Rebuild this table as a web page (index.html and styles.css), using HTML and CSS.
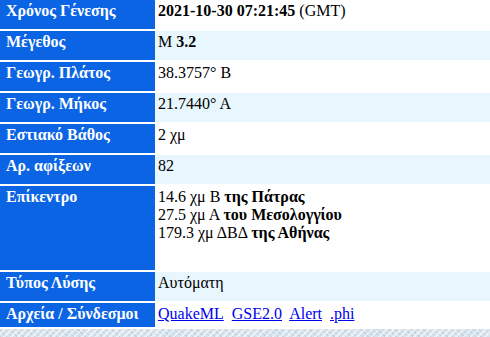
FILE: index.html
```html
<!DOCTYPE html>
<html lang="el">
<head>
<meta charset="utf-8">
<title>Σεισμός</title>
<link rel="stylesheet" href="styles.css">
</head>
<body>
<div class="info">
  <div class="row">
    <div class="label">Χρόνος Γένεσης</div>
    <div class="value"><b>2021-10-30 07:21:45</b> (GMT)</div>
  </div>
  <div class="row alt">
    <div class="label">Μέγεθος</div>
    <div class="value">M <b>3.2</b></div>
  </div>
  <div class="row">
    <div class="label">Γεωγρ. Πλάτος</div>
    <div class="value">38.3757° Β</div>
  </div>
  <div class="row alt">
    <div class="label">Γεωγρ. Μήκος</div>
    <div class="value">21.7440° Α</div>
  </div>
  <div class="row">
    <div class="label">Εστιακό Βάθος</div>
    <div class="value">2 χμ</div>
  </div>
  <div class="row alt">
    <div class="label">Αρ. αφίξεων</div>
    <div class="value">82</div>
  </div>
  <div class="row tall">
    <div class="label">Επίκεντρο</div>
    <div class="value">14.6 χμ Β <b>της Πάτρας</b><br>27.5 χμ Α <b>του Μεσολογγίου</b><br>179.3 χμ ΔΒΔ <b>της Αθήνας</b></div>
  </div>
  <div class="row alt">
    <div class="label">Τύπος Λύσης</div>
    <div class="value">Αυτόματη</div>
  </div>
  <div class="row short">
    <div class="label">Αρχεία / Σύνδεσμοι</div>
    <div class="value links"><a href="#">QuakeML</a>&nbsp; <a href="#">GSE2.0</a>&nbsp; <a href="#">Alert</a>&nbsp; <a href="#">.phi</a></div>
  </div>
</div>
</body>
</html>
```
FILE: styles.css
```css
html, body {
  margin: 0;
  padding: 0;
}
body {
  height: 337px;
  font-family: "Liberation Serif", "DejaVu Serif", "Times New Roman", serif;
  font-size: 16px;
  color: #000;
  background-color: #d6e2ec;
  background-image:
    repeating-linear-gradient(135deg, rgba(255,255,255,0.55) 0 2px, rgba(255,255,255,0) 2px 5px),
    repeating-linear-gradient(45deg, rgba(160,180,205,0.35) 0 1px, rgba(160,180,205,0) 1px 4px);
}
.info {
  display: flex;
  flex-direction: column;
  gap: 2px;
  padding-bottom: 2px;
  background: #fff;
}
.row {
  display: flex;
  height: 29px;
}
.row.tall {
  height: 84px;
}
.row.short {
  height: 24px;
}
.label {
  flex: none;
  width: 155px;
  box-sizing: border-box;
  padding: 2px 0 0 6px;
  background: #0a64e4;
  color: #fff;
  font-weight: bold;
  line-height: 18px;
}
.value {
  flex: 1;
  padding: 2px 0 0 3px;
  line-height: 18px;
  background: #fff;
}
.row.alt .value {
  background: #e8f6fe;
}
.links a {
  color: #0000ee;
}
```
